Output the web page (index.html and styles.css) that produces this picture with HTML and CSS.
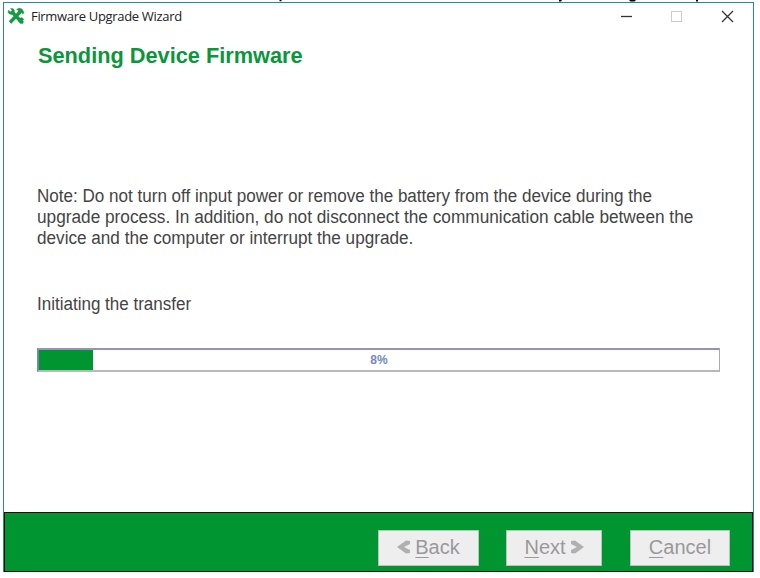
FILE: index.html
```html
<!DOCTYPE html>
<html lang="en">
<head>
<meta charset="utf-8">
<title>Firmware Upgrade Wizard</title>
<link rel="stylesheet" href="styles.css">
</head>
<body>
<svg class="clipped-line" width="760" height="2" viewBox="0 0 760 2" aria-hidden="true">
  <path d="M279.500 0h2v1.200h-2zM559 0h3l-1 1.500h-2zM629 0h7l-1.500 1.600h-4zM696 0h2v1.400h-2z"/>
</svg>
<main class="window">
  <header class="titlebar">
    <svg class="app-icon" width="18" height="18" viewBox="0 0 18 18">
      <path class="tool" d="M4.500 4.500 14.500 15M3 15.500 13 5"/>
      <path class="tool-head" d="M1 5.500 1.500 3 3.500 5 5 3.500 3.500 1.500 6 1.500 7.500 3.500 7 6 4.500 7.500 2.500 7zM9.500 2.500 12 1 15 2 16.500 4.500 17 6 15.500 7 14.500 5.500 12.500 6.500 11 5 11.500 3.500zM12 11.500 15 10.500 17 12.500 15.500 13.500 16.500 14.500 16 16.500 13.500 16.500 11.500 14.500z"/>
    </svg>
    <span class="caption">Firmware Upgrade Wizard</span>
    <svg class="controls" width="114" height="14" viewBox="0 0 114 14">
      <path class="dark" d="M1 7.500h11"/>
      <rect class="faint" x="51.500" y="2.500" width="10" height="10"/>
      <path class="dark" d="M102 2l11 11M113 2 102 13"/>
    </svg>
  </header>
  <section class="content">
    <h1><span class="line heading">Sending Device Firmware</span></h1>
    <p class="note"><span class="line l1">Note: Do not turn off input power or remove the battery from the device during the</span><span class="line l2">upgrade process. In addition, do not disconnect the communication cable between the</span><span class="line l3">device and the computer or interrupt the upgrade.</span></p>
    <p class="status"><span class="line l4">Initiating the transfer</span></p>
    <div class="progress"><div class="fill" style="width:8%"></div><span class="percent">8%</span></div>
  </section>
  <footer class="footer">
    <button class="btn back" disabled><svg width="14" height="16" viewBox="0 0 14 16"><path d="M0 8 9 1.500 13 2v3L7 8 13 11v3L9 14.500z"/></svg><span><u>B</u>ack</span></button>
    <button class="btn next" disabled><span><u>N</u>ext</span><svg width="14" height="16" viewBox="0 0 14 16"><path d="M14 8 5 1.500 1 2v3L7 8 1 11v3L5 14.500z"/></svg></button>
    <button class="btn cancel" disabled><span><u>C</u>ancel</span></button>
  </footer>
</main>
</body>
</html>
```
FILE: styles.css
```css
* { box-sizing: border-box; }
body { margin: 0; background: #fff; font-family: "Liberation Sans", Arial, sans-serif; overflow: hidden; }
.clipped-line { display: block; }
.window { width: 751px; height: 570px; margin-left: 3px; border: 1px solid #2484bc; border-bottom: 0; display: flex; flex-direction: column; background: #fff; }
.titlebar { height: 28px; display: flex; align-items: center; padding: 0 19px 2px 3px; }
.app-icon { flex: none; }
.tool { fill: none; stroke: #139a43; stroke-width: 3.400; }
.tool-head { fill: #139a43; stroke: #139a43; stroke-width: .4; }
.caption { margin-left: 6px; font: 13px/18px "Open Sans", sans-serif; letter-spacing: -0.32px; color: #222; white-space: nowrap; }
.controls { margin-left: auto; }
.dark { fill: none; stroke: #333; stroke-width: 1.300; }
.faint { fill: none; stroke: #ccc; }
.content { flex: 1; padding: 11px 33px 0; }
.line { display: block; width: max-content; transform-origin: 0 50%; }
.heading { transform: scaleX(.988); }
.l1 { transform: scaleX(.9475); }
.l2 { transform: scaleX(.9575); }
.l3 { transform: scaleX(.952); }
.l4 { transform: scaleX(.945); }
h1 { margin: 0; padding-left: 1px; font-size: 22px; line-height: 28px; color: #0b963a; white-space: nowrap; }
.note { margin: 116px 0 0; font-size: 18px; line-height: 21px; color: #444; white-space: nowrap; }
.status { margin: 45px 0 0; font-size: 18px; line-height: 21px; color: #444; }
.progress { position: relative; width: 683px; height: 24px; margin-top: 33px; border: 2px solid; border-width: 2px 1px 2px 2px; border-color: #9294b4 #aaabb2 #b8b9be #7289aa; }
.fill { height: 100%; background: #009530; }
.percent { position: absolute; inset: 0; text-align: center; font-size: 12px; font-weight: bold; line-height: 20px; color: #7189c1; }
.footer { height: 60px; border: 1px solid #06130a; background: #009530; display: flex; align-items: flex-start; padding: 17px 0 0 373px; }
.btn { height: 36px; padding: 0 0 2px; display: flex; align-items: center; justify-content: center; border: 1px solid #b5c6b9; background: #eee; color: #999; font: 20px/24px "Liberation Sans", Arial, sans-serif; }
.btn svg { fill: #b0b0b0; }
.btn u { text-underline-offset: 3px; text-decoration-thickness: 1px; }
.back { width: 101px; gap: 4px; }
.next { width: 96px; margin-left: 27px; gap: 4px; }
.cancel { width: 100px; margin-left: 28px; }
```
